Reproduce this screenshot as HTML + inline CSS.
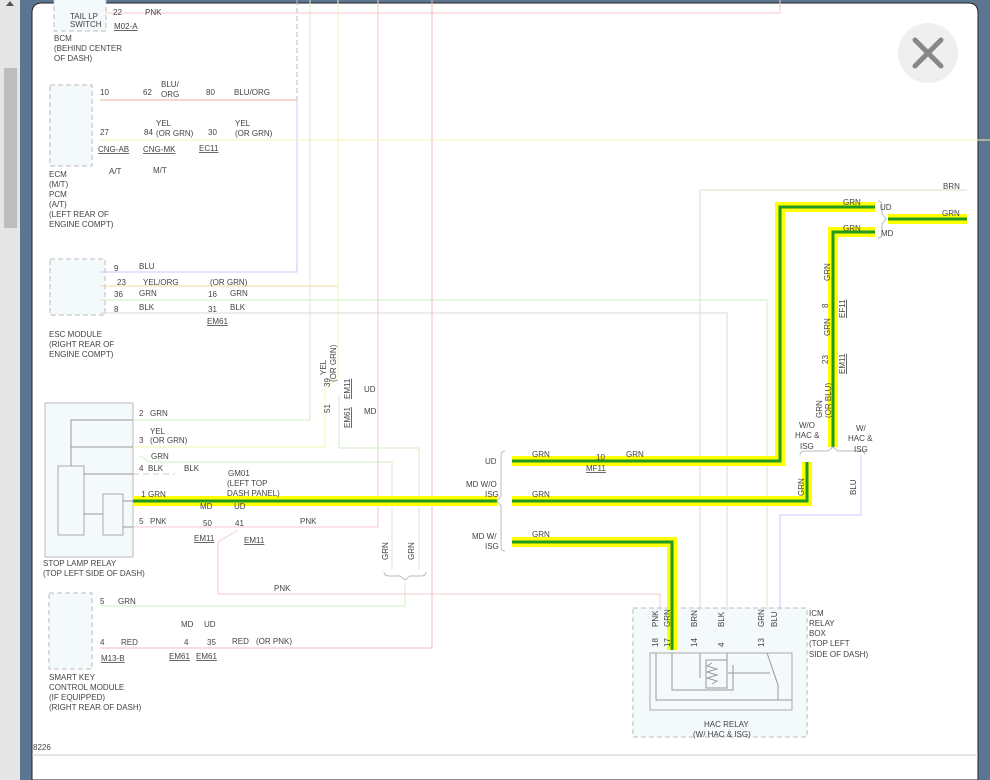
<!DOCTYPE html>
<html><head><meta charset="utf-8"><style>
html,body{margin:0;padding:0;width:990px;height:780px;overflow:hidden;background:#5c7591}
svg{position:absolute;left:0;top:0}
text{font-family:"Liberation Sans",sans-serif;font-size:8px;fill:#444}
.u{text-decoration:underline}
</style></head><body>
<svg width="990" height="780" viewBox="0 0 990 780">
<!-- frame -->
<rect x="0" y="0" width="20" height="780" fill="#e6e6e6"/>
<rect x="4" y="68" width="13" height="160" fill="#bdbdbd"/>
<path d="M6,6 L10,1 L14,6 Z" fill="#555"/>
<rect x="20" y="0" width="12" height="780" fill="#5c7591"/>
<path d="M32,780 V13 Q32,3 42,3 H968 Q978,3 978,13 V780 Z" fill="#fff" stroke="#222" stroke-width="1"/>
<line x1="32" y1="755" x2="978" y2="755" stroke="#ccc"/>
<circle cx="928" cy="53" r="30" fill="#efefef"/>
<path d="M915,40 L941,66 M941,40 L915,66" stroke="#888" stroke-width="5" stroke-linecap="round"/>

<!-- boxes -->
<g fill="#f4f9fc" stroke="#bbb" stroke-dasharray="5,3">
<rect x="54" y="-5" width="52" height="36"/>
<rect x="50" y="85" width="42" height="81"/>
<rect x="50" y="259" width="55" height="56"/>
<rect x="49" y="593" width="43" height="76"/>
<rect x="633" y="608" width="174" height="129"/>
</g>
<line x1="297" y1="0" x2="297" y2="100" stroke="#bbb" stroke-dasharray="5,3"/>
<rect x="45" y="403" width="88" height="154" fill="#f4f9fc" stroke="#bbb"/>
<rect x="58" y="466" width="26" height="69" fill="#f4f9fc" stroke="#aaa"/>
<rect x="103" y="494" width="20" height="41" fill="#f4f9fc" stroke="#aaa"/>
<path d="M71,466 V420 H133 M71,447 H133 M84,474 H133 M84,514 H103 M123,501 H133 M123,527 H133" stroke="#999" fill="none"/>
<rect x="650" y="653" width="142" height="57" fill="#f4f9fc" stroke="#aaa"/>

<!-- thin wires -->
<g fill="none" stroke-width="1">
<path d="M106,13 H780 V0" stroke="#f6c8cc"/>
<path d="M378,0 V527 H133" stroke="#f6c8cc"/>
<path d="M432,0 V648 H100" stroke="#f6b8bc"/>
<path d="M100,100 H297" stroke="#e8b0a0"/>
<path d="M297,100 V272 H100" stroke="#c8c8f8"/>
<path d="M100,140 H990" stroke="#f6f4b0"/>
<path d="M100,286 H338" stroke="#f6d8a0"/>
<path d="M338,0 V376 L325,390 V447 H133" stroke="#f6f4b0"/>
<path d="M310,0 V420 H133" stroke="#d0ecc8"/>
<path d="M100,300 H767 V610" stroke="#d0ecc8"/>
<path d="M100,313 H727 V610" stroke="#d8d8d8"/>
<path d="M700,610 V190 H967" stroke="#e0dcc8"/>
<path d="M339,395 V448 H419 V570" stroke="#d0ecc8"/>
<path d="M140,456 L150,462 H392 V570" stroke="#d0ecc8"/>
<path d="M405,582 V606 H100" stroke="#d0ecc8"/>
<path d="M238,530 L218,542 V594 H660 V610" stroke="#f6c8cc"/>
<path d="M861,455 V515 H780 V610" stroke="#c8c8f8"/>
<path d="M133,474 H175" stroke="#ccc" stroke-dasharray="6,4"/>
</g>

<!-- highlighted wires -->
<g fill="none" stroke-linejoin="miter">
<g stroke="#ffff00" stroke-width="10">
<path d="M133,501 H497 M512,501 H807 V462"/>
<path d="M512,461 H780 V207 H875"/>
<path d="M875,232 H833 V447"/>
<path d="M888,219 H967"/>
<path d="M512,542 H672 V650"/>
</g>
<g stroke="#1f9a1f" stroke-width="3">
<path d="M133,501 H497 M512,501 H807 V462"/>
<path d="M512,461 H780 V207 H875"/>
<path d="M875,232 H833 V447"/>
<path d="M888,219 H967"/>
<path d="M512,542 H672 V650"/>
</g>
</g>

<!-- braces -->
<path d="M505,451 Q501,451 501,456 V496 L497,501 L501,506 V547 Q501,551 505,551" fill="none" stroke="#bbb"/>
<path d="M878,201 Q882,201 882,206 V214 L886,219 L882,224 V234 Q882,238 878,238" fill="none" stroke="#bbb"/>
<path d="M800,455 Q800,451 805,451 H828 L833,447 L838,451 H860 Q865,451 865,455" fill="none" stroke="#bbb"/>
<path d="M384,572 Q384,576 389,576 H400 L405,580 L410,576 H421 Q426,576 426,572" fill="none" stroke="#bbb"/>

<!-- relay internals -->
<g fill="none" stroke="#999">
<path d="M656,653 V700 H792 M672,653 V690 H733 V665 M700,653 V678 M727,653 V660 H706 V688 H727 V660 M728,673 H770 M767,653 L778,685 V700"/>
<path d="M712,663 l-5,3 l10,3 l-10,3 l10,3 l-10,3 l10,3 l-5,3"/>
</g>

<!-- text -->
<text x="70" y="19">TAIL LP</text><text x="70" y="27">SWITCH</text>
<text x="113" y="15">22</text><text x="145" y="15">PNK</text>
<text x="114" y="29" class="u">M02-A</text>
<text x="54" y="41">BCM</text><text x="54" y="51">(BEHIND CENTER</text><text x="54" y="61">OF DASH)</text>
<text x="100" y="95">10</text><text x="143" y="95">62</text><text x="161" y="87">BLU/</text><text x="161" y="97">ORG</text>
<text x="206" y="95">80</text><text x="234" y="95">BLU/ORG</text>
<text x="100" y="135">27</text><text x="144" y="135">84</text><text x="156" y="126">YEL</text><text x="156" y="136">(OR GRN)</text>
<text x="208" y="135">30</text><text x="235" y="126">YEL</text><text x="235" y="136">(OR GRN)</text>
<text x="98" y="152" class="u">CNG-AB</text><text x="143" y="152" class="u">CNG-MK</text><text x="199" y="151" class="u">EC11</text>
<text x="109" y="174">A/T</text><text x="153" y="173">M/T</text>
<text x="49" y="177">ECM</text><text x="49" y="187">(M/T)</text><text x="49" y="197">PCM</text><text x="49" y="207">(A/T)</text><text x="49" y="217">(LEFT REAR OF</text><text x="49" y="227">ENGINE COMPT)</text>
<text x="114" y="271">9</text><text x="139" y="269">BLU</text>
<text x="117" y="285">23</text><text x="143" y="285">YEL/ORG</text><text x="210" y="285">(OR GRN)</text>
<text x="114" y="297">36</text><text x="139" y="296">GRN</text><text x="208" y="297">16</text><text x="230" y="296">GRN</text>
<text x="114" y="312">8</text><text x="139" y="310">BLK</text><text x="208" y="312">31</text><text x="230" y="310">BLK</text>
<text x="207" y="324" class="u">EM61</text>
<text x="49" y="337">ESC MODULE</text><text x="49" y="347">(RIGHT REAR OF</text><text x="49" y="357">ENGINE COMPT)</text>
<text x="139" y="416">2</text><text x="150" y="416">GRN</text>
<text x="150" y="434">YEL</text><text x="139" y="443">3</text><text x="150" y="443">(OR GRN)</text>
<text x="151" y="459">GRN</text>
<text x="139" y="471">4</text><text x="148" y="471">BLK</text><text x="184" y="471">BLK</text>
<text x="228" y="476">GM01</text><text x="227" y="486">(LEFT TOP</text><text x="227" y="496">DASH PANEL)</text>
<text x="141" y="497">1</text><text x="148" y="497">GRN</text>
<text x="200" y="509">MD</text><text x="234" y="509">UD</text>
<text x="139" y="524">5</text><text x="150" y="524">PNK</text>
<text x="203" y="526">50</text><text x="235" y="526">41</text><text x="300" y="524">PNK</text>
<text x="194" y="541" class="u">EM11</text><text x="244" y="543" class="u">EM11</text>
<text x="43" y="566">STOP LAMP RELAY</text><text x="43" y="576">(TOP LEFT SIDE OF DASH)</text>
<text x="274" y="591">PNK</text>
<text x="100" y="604">5</text><text x="118" y="604">GRN</text>
<text x="181" y="627">MD</text><text x="204" y="627">UD</text>
<text x="100" y="645">4</text><text x="121" y="645">RED</text><text x="184" y="645">4</text><text x="207" y="645">35</text>
<text x="232" y="644">RED</text><text x="256" y="644">(OR PNK)</text>
<text x="101" y="661" class="u">M13-B</text><text x="169" y="659" class="u">EM61</text><text x="196" y="659" class="u">EM61</text>
<text x="49" y="680">SMART KEY</text><text x="49" y="690">CONTROL MODULE</text><text x="49" y="700">(IF EQUIPPED)</text><text x="49" y="710">(RIGHT REAR OF DASH)</text>
<text x="33" y="750">8226</text>
<text x="364" y="392">UD</text><text x="364" y="414">MD</text>
<text x="485" y="464">UD</text><text x="466" y="487">MD W/O</text><text x="485" y="497">ISG</text>
<text x="472" y="539">MD W/</text><text x="485" y="549">ISG</text>
<text x="532" y="457">GRN</text><text x="532" y="497">GRN</text><text x="532" y="537">GRN</text>
<text x="596" y="460">10</text><text x="626" y="457">GRN</text><text x="586" y="471" class="u">MF11</text>
<text x="843" y="205">GRN</text><text x="843" y="231">GRN</text>
<text x="880" y="210">UD</text><text x="881" y="236">MD</text>
<text x="943" y="189">BRN</text><text x="942" y="216">GRN</text>
<text x="799" y="428">W/O</text><text x="795" y="438">HAC &amp;</text><text x="800" y="449">ISG</text>
<text x="856" y="431">W/</text><text x="848" y="441">HAC &amp;</text><text x="854" y="452">ISG</text>
<text x="704" y="727">HAC RELAY</text><text x="693" y="737">(W/ HAC &amp; ISG)</text>
<text x="809" y="616">ICM</text><text x="809" y="626">RELAY</text><text x="809" y="636">BOX</text><text x="809" y="646">(TOP LEFT</text><text x="809" y="657">SIDE OF DASH)</text>
<g>
<text transform="translate(326,375) rotate(-90)">YEL</text>
<text transform="translate(336,382) rotate(-90)">(OR GRN)</text>
<text transform="translate(330,387) rotate(-90)">39</text>
<text transform="translate(330,413) rotate(-90)">51</text>
<text transform="translate(350,399) rotate(-90)" class="u">EM11</text>
<text transform="translate(350,428) rotate(-90)" class="u">EM61</text>
<text transform="translate(388,560) rotate(-90)">GRN</text>
<text transform="translate(414,560) rotate(-90)">GRN</text>
<text transform="translate(830,281) rotate(-90)">GRN</text>
<text transform="translate(828,308) rotate(-90)">8</text>
<text transform="translate(845,318) rotate(-90)" class="u">EF11</text>
<text transform="translate(830,336) rotate(-90)">GRN</text>
<text transform="translate(828,364) rotate(-90)">23</text>
<text transform="translate(845,374) rotate(-90)" class="u">EM11</text>
<text transform="translate(822,418) rotate(-90)">GRN</text>
<text transform="translate(831,418) rotate(-90)">(OR BLU)</text>
<text transform="translate(804,496) rotate(-90)">GRN</text>
<text transform="translate(856,495) rotate(-90)">BLU</text>
<text transform="translate(658,627) rotate(-90)">PNK</text>
<text transform="translate(670,627) rotate(-90)">GRN</text>
<text transform="translate(697,627) rotate(-90)">BRN</text>
<text transform="translate(724,627) rotate(-90)">BLK</text>
<text transform="translate(764,627) rotate(-90)">GRN</text>
<text transform="translate(777,627) rotate(-90)">BLU</text>
<text transform="translate(658,647) rotate(-90)">18</text>
<text transform="translate(670,647) rotate(-90)">17</text>
<text transform="translate(697,647) rotate(-90)">14</text>
<text transform="translate(724,647) rotate(-90)">4</text>
<text transform="translate(764,647) rotate(-90)">13</text>
</g>
</svg>
</body></html>
